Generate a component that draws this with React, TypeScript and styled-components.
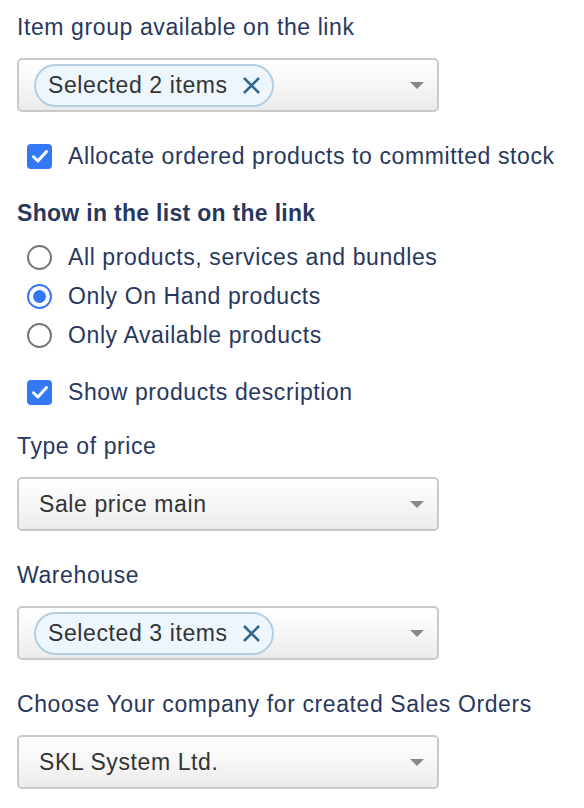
import React, { useState } from "react";
import styled, { createGlobalStyle } from "styled-components";

const colors = {
  label: "#28385d",
  text: "#333333",
  blue: "#3478f6",
  border: "#c9c9c9",
  chipBg: "#eef6fd",
  chipBorder: "#b5cde0",
  chipX: "#33668f",
  arrow: "#888888",
};

const GlobalStyle = createGlobalStyle`
  body {
    margin: 0;
    background: #ffffff;
    font-family: "Liberation Sans", Arial, sans-serif;
    font-size: 23px;
    letter-spacing: 0.6px;
  }
`;

const Form = styled.div`
  width: 584px;
  padding: 12px 0 0 17px;
  box-sizing: border-box;
`;

const Field = styled.div`
  margin-bottom: 29px;
`;

const Label = styled.div<{ $bold?: boolean }>`
  line-height: 30px;
  color: ${colors.label};
  font-weight: ${(p) => (p.$bold ? 700 : 400)};
  letter-spacing: ${(p) => (p.$bold ? "0.3px" : "0.6px")};
  margin-bottom: ${(p) => (p.$bold ? "10px" : "16px")};
`;

const SelectBox = styled.div`
  width: 422px;
  height: 54px;
  box-sizing: border-box;
  border: 2px solid ${colors.border};
  border-radius: 5px;
  background: linear-gradient(to bottom, #ffffff 0%, #f6f6f6 50%, #ebebeb 100%);
  display: flex;
  align-items: center;
  padding: 0 12px 0 15px;
  color: ${colors.text};
`;

const SelectValue = styled.span`
  flex: 1;
  padding-left: 5px;
`;

const Chips = styled.div`
  flex: 1;
  display: flex;
`;

const Chip = styled.span`
  display: inline-flex;
  align-items: center;
  gap: 14px;
  height: 43px;
  box-sizing: border-box;
  padding: 0 11px 0 12px;
  border: 2px solid ${colors.chipBorder};
  border-radius: 22px;
  background: ${colors.chipBg};
  color: ${colors.text};
`;

const Arrow = styled.span`
  width: 0;
  height: 0;
  border-left: 7px solid transparent;
  border-right: 7px solid transparent;
  border-top: 7px solid ${colors.arrow};
  margin-right: 1px;
`;

const OptionRow = styled.label<{ $height: number }>`
  display: flex;
  align-items: center;
  gap: 16px;
  height: ${(p) => p.$height}px;
  padding-left: 10px;
  color: ${colors.label};
  cursor: pointer;
`;

const CheckBox = styled.span`
  width: 25px;
  height: 25px;
  border-radius: 4px;
  background: ${colors.blue};
  display: flex;
  align-items: center;
  justify-content: center;
`;

const Radio = styled.span<{ $checked: boolean }>`
  width: 25px;
  height: 25px;
  box-sizing: border-box;
  border-radius: 50%;
  border: 2px solid ${(p) => (p.$checked ? colors.blue : "#767676")};
  display: flex;
  align-items: center;
  justify-content: center;
  background: #fff;

  &::after {
    content: "";
    width: 13px;
    height: 13px;
    border-radius: 50%;
    background: ${(p) => (p.$checked ? colors.blue : "transparent")};
  }
`;

const Spacer = styled.div<{ $h: number }>`
  height: ${(p) => p.$h}px;
`;

const Check = () => (
  <CheckBox>
    <svg width="20" height="20" viewBox="0 0 16 16">
      <path
        d="M2.8 8.6 L6.3 12 L13.2 4.4"
        fill="none"
        stroke="#fff"
        strokeWidth="2.4"
        strokeLinecap="round"
        strokeLinejoin="round"
      />
    </svg>
  </CheckBox>
);

const Close = () => (
  <svg width="19" height="19" viewBox="0 0 19 19">
    <path
      d="M2 2 L17 17 M17 2 L2 17"
      stroke={colors.chipX}
      strokeWidth="2.6"
      strokeLinecap="butt"
    />
  </svg>
);

const MultiSelect = ({ text }: { text: string }) => (
  <SelectBox>
    <Chips>
      <Chip>
        {text}
        <Close />
      </Chip>
    </Chips>
    <Arrow />
  </SelectBox>
);

const Select = ({ value }: { value: string }) => (
  <SelectBox>
    <SelectValue>{value}</SelectValue>
    <Arrow />
  </SelectBox>
);

const radioOptions = [
  "All products, services and bundles",
  "Only On Hand products",
  "Only Available products",
];

export default function App() {
  const [selected, setSelected] = useState(1);

  return (
    <>
      <GlobalStyle />
      <Form>
        <Field>
          <Label>Item group available on the link</Label>
          <MultiSelect text="Selected 2 items" />
        </Field>
        <OptionRow $height={30}>
          <Check />
          Allocate ordered products to committed stock
        </OptionRow>
        <Spacer $h={27} />
        <Label $bold>Show in the list on the link</Label>
        {radioOptions.map((opt, i) => (
          <OptionRow key={opt} $height={39} onClick={() => setSelected(i)}>
            <Radio $checked={selected === i} />
            {opt}
          </OptionRow>
        ))}
        <Spacer $h={22} />
        <OptionRow $height={30}>
          <Check />
          Show products description
        </OptionRow>
        <Spacer $h={24} />
        <Field>
          <Label>Type of price</Label>
          <Select value="Sale price main" />
        </Field>
        <Field>
          <Label>Warehouse</Label>
          <MultiSelect text="Selected 3 items" />
        </Field>
        <Field>
          <Label>Choose Your company for created Sales Orders</Label>
          <Select value="SKL System Ltd." />
        </Field>
      </Form>
    </>
  );
}
